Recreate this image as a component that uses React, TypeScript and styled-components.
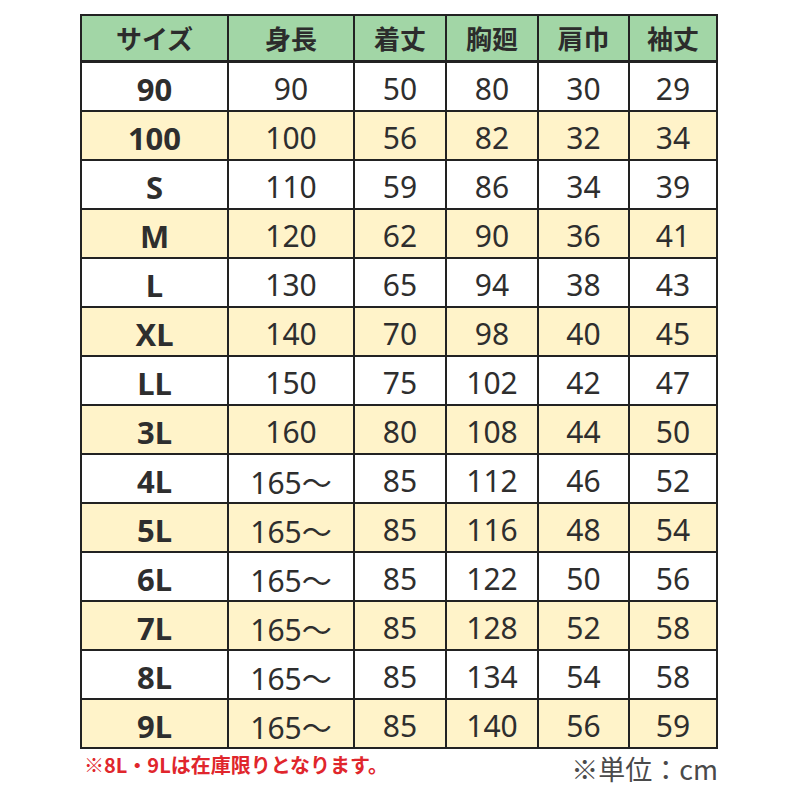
import React from "react";
import styled, { createGlobalStyle } from "styled-components";

const Global = createGlobalStyle`
  html, body { margin: 0; padding: 0; background: #fff; }
  body { font-family: "Noto Sans", "Noto Sans CJK JP", sans-serif; }
`;

const Page = styled.div`
  width: 800px;
  height: 800px;
  box-sizing: border-box;
  padding: 14px 0 0 80px;
  background: #fff;
`;

const Table = styled.div`
  width: 638px;
  box-sizing: border-box;
  display: grid;
  grid-template-columns: 145px 124px 90px 90px 89px 86px;
  grid-template-rows: 45px repeat(14, 47px);
  gap: 2px;
  padding: 2px;
  background: #222;
`;

const HeadCell = styled.div`
  background: #a2d6a6;
  box-shadow: inset 0 -1px 0 #222;
  display: flex;
  align-items: center;
  justify-content: center;
  font-family: "Noto Sans CJK JP", sans-serif;
  font-weight: 700;
  font-size: 26px;
  color: #2c2c2c;
  padding-bottom: 2px;
`;

const Cell = styled.div<{ $alt: boolean; $bold?: boolean }>`
  background: ${(p) => (p.$alt ? "#fff3c9" : "#ffffff")};
  display: flex;
  align-items: center;
  justify-content: center;
  font-family: "Noto Sans", "Noto Sans CJK JP", sans-serif;
  font-weight: ${(p) => (p.$bold ? 700 : 400)};
  font-size: ${(p) => (p.$bold ? "31px" : "30px")};
  color: #2e2e2e;
  padding-top: 4px;
  box-sizing: border-box;
`;

const Footer = styled.div`
  width: 638px;
  display: flex;
  justify-content: space-between;
  align-items: flex-start;
  margin-top: 3px;
`;

const Note = styled.div`
  font-family: "Noto Sans CJK JP", sans-serif;
  font-weight: 700;
  font-size: 20px;
  color: #e0262c;
  padding-left: 4px;
  line-height: 26px;
`;

const Unit = styled.div`
  font-family: "Noto Sans CJK JP", sans-serif;
  font-weight: 400;
  font-size: 27px;
  color: #4a4a4a;
  line-height: 34px;
`;

const headers = ["サイズ", "身長", "着丈", "胸廻", "肩巾", "袖丈"];
const rows: string[][] = [
  ["90", "90", "50", "80", "30", "29"],
  ["100", "100", "56", "82", "32", "34"],
  ["S", "110", "59", "86", "34", "39"],
  ["M", "120", "62", "90", "36", "41"],
  ["L", "130", "65", "94", "38", "43"],
  ["XL", "140", "70", "98", "40", "45"],
  ["LL", "150", "75", "102", "42", "47"],
  ["3L", "160", "80", "108", "44", "50"],
  ["4L", "165～", "85", "112", "46", "52"],
  ["5L", "165～", "85", "116", "48", "54"],
  ["6L", "165～", "85", "122", "50", "56"],
  ["7L", "165～", "85", "128", "52", "58"],
  ["8L", "165～", "85", "134", "54", "58"],
  ["9L", "165～", "85", "140", "56", "59"],
];

export default function App() {
  return (
    <Page>
      <Global />
      <Table>
        {headers.map((h) => (
          <HeadCell key={h}>{h}</HeadCell>
        ))}
        {rows.map((r, i) =>
          r.map((v, j) => (
            <Cell key={`${i}-${j}`} $alt={i % 2 === 1} $bold={j === 0}>
              {v}
            </Cell>
          ))
        )}
      </Table>
      <Footer>
        <Note>※8L・9Lは在庫限りとなります。</Note>
        <Unit>※単位：cm</Unit>
      </Footer>
    </Page>
  );
}
